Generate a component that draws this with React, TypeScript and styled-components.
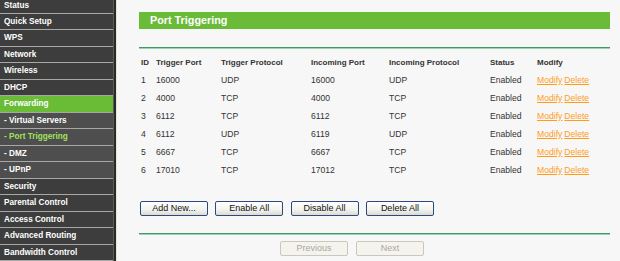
import React from 'react'
import styled, { createGlobalStyle } from 'styled-components'

const GlobalStyle = createGlobalStyle`
  html, body {
    margin: 0;
    padding: 0;
    background: #f7f7f7;
    overflow: hidden;
  }
  body {
    font-family: 'Liberation Sans', Arial, sans-serif;
  }
`

const Page = styled.div`
  display: flex;
  width: 620px;
  height: 261px;
  overflow: hidden;
`

const Sidebar = styled.div`
  display: flex;
  width: 117px;
  flex-shrink: 0;
`

const Menu = styled.div`
  width: 113px;
  margin-top: -2.5px;
  background: #3d3d3d;
`

const Edge = styled.div`
  width: 4px;
  background: linear-gradient(to right, #5a5a5a 0 1px, #2a2a2a 1px 3px, #e9e6d6 3px 4px);
`

const MenuItem = styled.div<{ $sub?: boolean; $active?: boolean; $current?: boolean }>`
  box-sizing: border-box;
  height: 16.47px;
  line-height: 15.47px;
  border-bottom: 1px solid #a7a7a7;
  padding-left: 4px;
  font-size: 8.2px;
  font-weight: bold;
  white-space: nowrap;
  color: ${(p) => (p.$current ? '#a2e25b' : '#ffffff')};
  background: ${(p) => (p.$active ? '#6abb36' : p.$sub ? '#4e4e4e' : '#3d3d3d')};
`

const Content = styled.div`
  flex: 1;
  padding: 12px 10px 0 22px;
`

const TitleBar = styled.div`
  height: 17px;
  line-height: 17px;
  background: #6abb38;
  color: #ffffff;
  font-size: 10.8px;
  font-weight: bold;
  padding-left: 11px;
`

const Rule = styled.div<{ $top: number }>`
  margin-top: ${(p) => p.$top}px;
  height: 2px;
  background: linear-gradient(to bottom, #3f9a6a 0 1px, #9fd0b4 1px 2px);
`

const Table = styled.div`
  margin-top: 6px;
  margin-left: 2px;
`

const Row = styled.div<{ $head?: boolean }>`
  display: grid;
  grid-template-columns: 15px 65px 90px 78px 101px 47px 1fr;
  height: ${(p) => (p.$head ? '16px' : '18px')};
  line-height: ${(p) => (p.$head ? '16px' : '18px')};
  font-size: ${(p) => (p.$head ? '8px' : '8.6px')};
  font-weight: ${(p) => (p.$head ? 'bold' : 'normal')};
  color: #333333;
  white-space: nowrap;
`

const ActionLink = styled.a`
  color: #ff9c1a;
  text-decoration: underline;
  margin-right: 2px;
  cursor: pointer;
`

const ButtonBar = styled.div`
  display: flex;
  gap: 7.3px;
  margin-top: 22px;
  margin-left: 1px;
`

const Button = styled.button<{ $disabled?: boolean }>`
  box-sizing: border-box;
  width: 68px;
  height: 15px;
  padding: 0;
  font-family: 'Liberation Sans', Arial, sans-serif;
  font-size: 9px;
  line-height: 13px;
  border-radius: 2px;
  border: 1px solid ${(p) => (p.$disabled ? '#cac8bb' : '#2c4a80')};
  color: ${(p) => (p.$disabled ? '#aca899' : '#111111')};
  background: ${(p) =>
    p.$disabled ? '#f4f3ee' : 'linear-gradient(to bottom, #ffffff 0%, #f2f2ee 60%, #dcdad0 100%)'};
`

const Pager = styled.div`
  display: flex;
  gap: 8px;
  margin-top: 6px;
  margin-left: 141px;
`

const menu: { label: string; sub?: boolean; active?: boolean; current?: boolean }[] = [
  { label: 'Status' },
  { label: 'Quick Setup' },
  { label: 'WPS' },
  { label: 'Network' },
  { label: 'Wireless' },
  { label: 'DHCP' },
  { label: 'Forwarding', active: true },
  { label: '- Virtual Servers', sub: true },
  { label: '- Port Triggering', sub: true, current: true },
  { label: '- DMZ', sub: true },
  { label: '- UPnP', sub: true },
  { label: 'Security' },
  { label: 'Parental Control' },
  { label: 'Access Control' },
  { label: 'Advanced Routing' },
  { label: 'Bandwidth Control' },
]

const rules = [
  ['1', '16000', 'UDP', '16000', 'UDP'],
  ['2', '4000', 'TCP', '4000', 'TCP'],
  ['3', '6112', 'TCP', '6112', 'TCP'],
  ['4', '6112', 'UDP', '6119', 'UDP'],
  ['5', '6667', 'TCP', '6667', 'TCP'],
  ['6', '17010', 'TCP', '17012', 'TCP'],
]

export default function App() {
  return (
    <Page>
      <GlobalStyle />
      <Sidebar>
        <Menu>
          {menu.map((m) => (
            <MenuItem key={m.label} $sub={m.sub} $active={m.active} $current={m.current}>
              {m.label}
            </MenuItem>
          ))}
        </Menu>
        <Edge />
      </Sidebar>
      <Content>
        <TitleBar>Port Triggering</TitleBar>
        <Rule $top={18} />
        <Table>
          <Row $head>
            <div>ID</div>
            <div>Trigger Port</div>
            <div>Trigger Protocol</div>
            <div>Incoming Port</div>
            <div>Incoming Protocol</div>
            <div>Status</div>
            <div>Modify</div>
          </Row>
          {rules.map((r) => (
            <Row key={r[0]}>
              {r.map((c, i) => (
                <div key={i}>{c}</div>
              ))}
              <div>Enabled</div>
              <div>
                <ActionLink>Modify</ActionLink>
                <ActionLink>Delete</ActionLink>
              </div>
            </Row>
          ))}
        </Table>
        <ButtonBar>
          <Button>Add New...</Button>
          <Button>Enable All</Button>
          <Button>Disable All</Button>
          <Button>Delete All</Button>
        </ButtonBar>
        <Rule $top={17} />
        <Pager>
          <Button $disabled>Previous</Button>
          <Button $disabled>Next</Button>
        </Pager>
      </Content>
    </Page>
  )
}
